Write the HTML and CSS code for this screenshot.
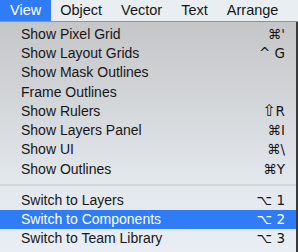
FILE: index.html
```html
<!DOCTYPE html>
<html lang="en">
<head>
  <meta charset="UTF-8" />
  <title>View menu</title>
  <link rel="stylesheet" href="styles.css">
</head>
<body>
  <div class="menubar">
    <span class="bar-item active">View</span>
    <span class="bar-item">Object</span>
    <span class="bar-item">Vector</span>
    <span class="bar-item">Text</span>
    <span class="bar-item">Arrange</span>
  </div>

  <div class="dropdown">
    <div class="group">
      <div class="row"><span>Show Pixel Grid</span><span class="key">⌘'</span></div>
      <div class="row"><span>Show Layout Grids</span><span class="key">^ G</span></div>
      <div class="row"><span>Show Mask Outlines</span></div>
      <div class="row"><span>Frame Outlines</span></div>
      <div class="row"><span>Show Rulers</span><span class="key"><span class="shift">⇧</span>R</span></div>
      <div class="row"><span>Show Layers Panel</span><span class="key">⌘I</span></div>
      <div class="row"><span>Show UI</span><span class="key">⌘\</span></div>
      <div class="row"><span>Show Outlines</span><span class="key">⌘Y</span></div>
    </div>
    <div class="separator"></div>
    <div class="group">
      <div class="row"><span>Switch to Layers</span><span class="key">⌥ 1</span></div>
      <div class="row selected"><span>Switch to Components</span><span class="key">⌥ 2</span></div>
      <div class="row"><span>Switch to Team Library</span><span class="key">⌥ 3</span></div>
    </div>
  </div>
</body>
</html>
```

FILE: styles.css
```css
* {
  box-sizing: border-box;
}

body {
  margin: 0;
  width: 298px;
  height: 252px;
  overflow: hidden;
  background: #3a3a3a;
  font-family: "Liberation Sans", "DejaVu Sans", sans-serif;
  color: #161616;
}

.menubar {
  height: 22px;
  display: flex;
  align-items: stretch;
  background: #e9eef3;
  border-bottom: 1px solid #8f9297;
  font-size: 14.5px;
}

.bar-item {
  display: flex;
  align-items: center;
  padding: 0 9.5px 1px;
}

.bar-item:first-child {
  padding-left: 10px;
}

.bar-item.active {
  background: #2f7cf6;
  color: #fff;
}

.dropdown {
  width: 296px;
  height: 230px;
  padding-top: 2.5px;
  background: linear-gradient(to bottom, #c5c6c8 0%, #d3d6d9 35%, #e3e8ed 70%, #e8eef4 100%);
  font-size: 14px;
}

.row {
  height: 19.3px;
  display: flex;
  align-items: center;
  justify-content: space-between;
  padding: 0 11px 1px 21px;
}

.row.selected {
  background: #2f7cf6;
  color: #fff;
}

.key {
  font-family: "DejaVu Sans", sans-serif;
  font-size: 13.5px;
}

.shift {
  font-size: 16px;
  line-height: 1;
}

.separator {
  height: 11.5px;
  display: flex;
  align-items: center;
}

.separator::after {
  content: "";
  display: block;
  width: 100%;
  height: 2px;
  background: #d2d5d9;
}
```
